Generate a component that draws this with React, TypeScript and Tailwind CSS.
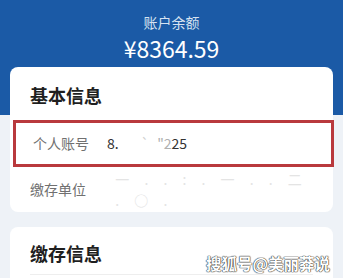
export default function App() {
  return (
    <div
      className="relative w-[343px] h-[278px] overflow-hidden bg-[#eef2f7]"
      style={{ fontFamily: '"Noto Sans CJK SC", "Noto Sans", sans-serif' }}
    >
      {/* Balance header */}
      <div className="h-[115px] bg-[#1b5aa6] pt-[13px] text-center">
        <div className="text-[14px] leading-[18px] text-[#d6e2f1]">账户余额</div>
        <div className="mt-[3px] text-[23px] leading-[28px] text-white">¥8364.59</div>
      </div>

      {/* Basic info card */}
      <div className="-mt-[48px] mx-[10px] rounded-[8px] bg-white">
        <div className="pt-[16px] px-[20px] text-[18px] leading-[24px] font-bold text-[#1f1f1f]">
          基本信息
        </div>
        <div className="mt-[13px] ml-[3px] -mr-[1px] h-[47px] border-[3px] border-[#b9393d] flex items-center px-[17px] text-[14px]">
          <span className="w-[74px] text-[#707070]">个人账号</span>
          <span className="text-[#333]">8.</span>
          <span className="ml-[22px] text-[#d0d0d0]">`</span>
          <span className="ml-[8px] text-[#b0b0b0]">"2</span>
          <span className="text-[#333]">25</span>
        </div>
        <div className="h-[45px] flex items-center px-[20px] text-[14px]">
          <span className="w-[112px] text-[#707070]">缴存单位</span>
          <span className="text-[#e4e4e4] tracking-[6px]">一 . . : . 一 . . 二 . ○ .</span>
        </div>
      </div>

      {/* Deposit info card */}
      <div className="mt-[15px] mx-[10px] h-[60px] rounded-[8px] bg-white">
        <div className="pt-[14px] px-[20px] text-[18px] leading-[24px] font-bold text-[#1f1f1f]">
          缴存信息
        </div>
        <div className="mt-[9px] mx-[20px] h-px bg-[#eeeeee]" />
      </div>

      {/* Watermark */}
      <div
        className="absolute right-[13px] bottom-[5px] text-[15.5px] leading-[20px] font-bold text-white"
        style={{ textShadow: "0 0 1px #333, 0 0 1px #333, 0 0 1px #333" }}
      >
        搜狐号@美丽莽说
      </div>
    </div>
  );
}
